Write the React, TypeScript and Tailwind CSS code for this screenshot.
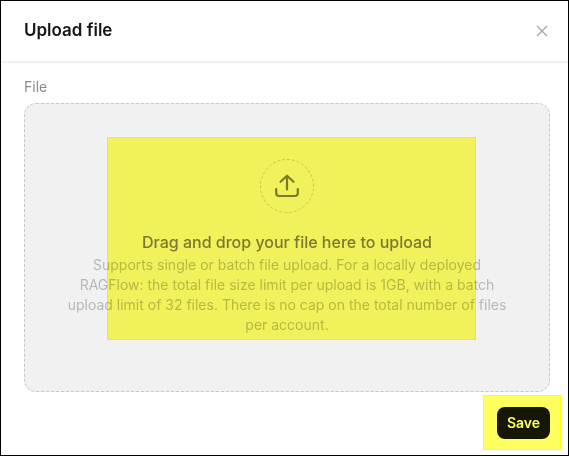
export default function App() {
  return (
    <div className="relative flex h-[456px] w-[569px] flex-col overflow-hidden border border-black bg-white font-['Inter',sans-serif]">
      <div className="flex h-[62px] shrink-0 items-center justify-between border-b-2 border-[#f1f1f1] pl-[23px] pr-[20px]">
        <h1 className="text-[17px] font-semibold text-[#161616]">Upload file</h1>
        <svg width="12" height="12" viewBox="0 0 12 12" fill="none" stroke="#a3a3a3" strokeWidth="1.2">
          <path d="M1 1l10 10M11 1L1 11" />
        </svg>
      </div>

      <div className="flex flex-1 flex-col pl-[23px] pr-[18px] pt-[14px]">
        <label className="h-[26px] text-sm leading-5 text-[#8a8a8a]">File</label>
        <div className="flex h-[289px] flex-col items-center rounded-xl border border-dashed border-[#c8c8c8] bg-[#f1f1f1] pt-[55px]">
          <div className="flex h-[54px] w-[54px] items-center justify-center rounded-full border border-dashed border-[#c4c4c4]">
            <svg width="24" height="24" viewBox="0 0 24 24" fill="none" stroke="#7a7a7a" strokeWidth="2.2" strokeLinecap="round" strokeLinejoin="round">
              <path d="M12 15.5V1.8" />
              <path d="M5.5 7.8L12 1.8l6.5 6" />
              <path d="M1.2 15v4a3 3 0 0 0 3 3h15.6a3 3 0 0 0 3-3v-4" />
            </svg>
          </div>
          <p className="mt-[17px] text-base font-medium leading-6 text-[#7a7a7a]">Drag and drop your file here to upload</p>
          <p className="mt-[1px] w-[446px] text-center text-sm leading-5 text-[#b8b8b8]">
            Supports single or batch file upload. For a locally deployed RAGFlow: the total file size limit per upload is 1GB, with a batch upload limit of 32 files. There is no cap on the total number of files per account.
          </p>
        </div>
        <div className="mt-[15px] flex justify-end">
          <button className="h-8 w-[53px] rounded-lg bg-[#161616] text-sm font-semibold text-white">Save</button>
        </div>
      </div>

      {/* highlight boxes multiplied over the dialog */}
      <div className="absolute left-[106px] top-[136px] h-[203px] w-[369px] border border-[#ffff00] bg-[#ffff60] bg-clip-padding mix-blend-multiply" />
      <div className="absolute left-[482px] top-[394px] h-[55px] w-[78px] border border-[#ffff00] bg-[#ffff60] bg-clip-padding mix-blend-multiply" />
    </div>
  );
}
